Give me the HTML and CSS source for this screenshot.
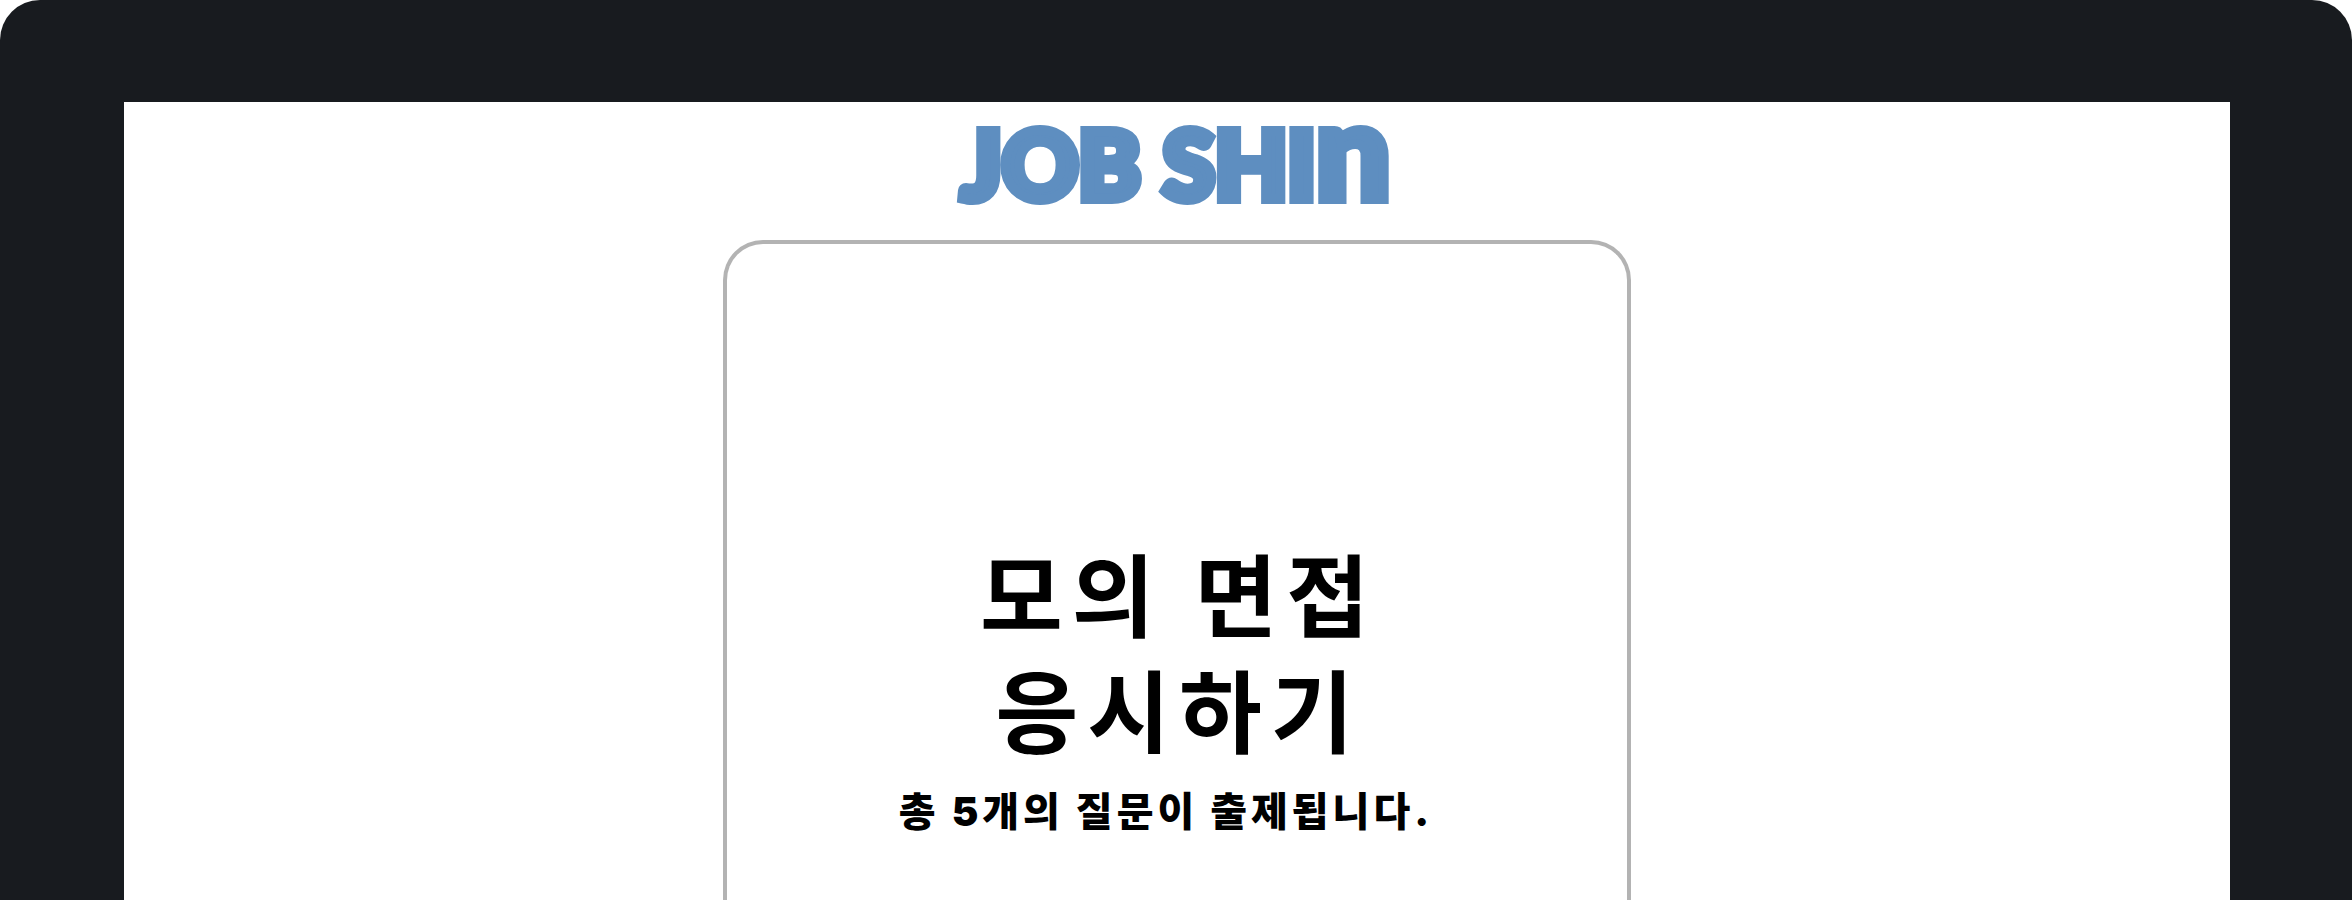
FILE: index.html
```html
<!DOCTYPE html>
<html lang="ko">
<head>
<meta charset="utf-8">
<meta name="viewport" content="width=device-width, initial-scale=1">
<title>JOB SHIN</title>
<link rel="stylesheet" href="styles.css">
</head>
<body>
<div class="bezel">
  <div class="screen">
    <header class="logo">JOB SHI<span class="logo-tail">n</span></header>
    <main class="card">
      <h1 class="title">모의 면접<br>응시하기</h1>
      <p class="note">총 5개의 질문이 출제됩니다.</p>
    </main>
  </div>
</div>
</body>
</html>
```
FILE: styles.css
```css
* {
  box-sizing: border-box;
}

body {
  margin: 0;
  background: #fff;
  color: #000;
  font-family: Inter, "Noto Sans CJK KR", sans-serif;
}

.bezel {
  display: flex;
  min-height: 100vh;
  padding: 102px 122px 0 124px;
  background: #181b1f;
  border-radius: 40px 40px 0 0;
}

.screen {
  flex: 1;
  display: flex;
  flex-direction: column;
  align-items: center;
  background: #fff;
}

.logo {
  padding: 11px 2px 27px 0;
  color: #5e8ec0;
  font-family: Lato, sans-serif;
  font-size: 94px;
  font-weight: 900;
  line-height: 100px;
  -webkit-text-stroke: 10px #5e8ec0;
}

.logo-tail {
  font-size: 132px;
  line-height: 0;
}

.card {
  flex: 1;
  width: 908px;
  max-width: 100%;
  padding: 293px 24px 0;
  border: 4px solid #b3b3b3;
  border-bottom: 0;
  border-radius: 40px 40px 0 0;
  text-align: center;
}

.title {
  margin: 0;
  padding-left: 4px;
  font-family: Lato, "Noto Sans CJK KR", sans-serif;
  font-size: 90px;
  font-weight: 700;
  line-height: 116px;
  letter-spacing: 9px;
}

.note {
  margin: 19px 0 0;
  padding-right: 22px;
  font-size: 40px;
  font-weight: 900;
  line-height: 48px;
  letter-spacing: 4px;
}
```
